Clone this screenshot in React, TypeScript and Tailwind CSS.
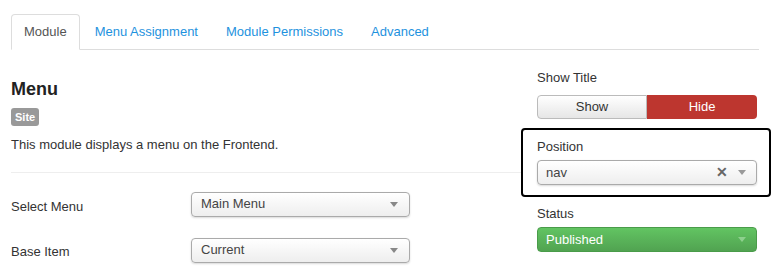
import React from "react";

const TABS = ["Module", "Menu Assignment", "Module Permissions", "Advanced"];

const Caret = ({ cls }: { cls: string }) => (
  <svg viewBox="0 0 8 5" className={`w-[8px] h-[5px] ${cls}`}><path d="M0 0h8L4 5z" /></svg>
);

const SelectBox = ({ value }: { value: string }) => (
  <div className="w-[219px] h-[25px] rounded-[4px] border border-[#aaa] bg-gradient-to-b from-white to-[#eee] shadow-[0_1px_2px_rgba(0,0,0,0.15)] flex items-center justify-between pl-[9px] pr-[11px]">
    <span className="text-[13px] text-[#444]">{value}</span>
    <Caret cls="fill-[#888]" />
  </div>
);

export default function App() {
  return (
    <div className="w-[780px] h-[274px] bg-white text-[#333] text-[13px] overflow-hidden" style={{ fontFamily: '"Liberation Sans", Arial, sans-serif' }}>
      <div className="pt-[14px] pl-[11px] w-[759px]">
        <div className="flex border-b border-[#ddd] h-[36px]">
          {TABS.map((t, i) => (
            <div key={t}
              className={`px-3 mr-[2px] flex items-center rounded-t-[4px] border mb-[-1px] ${i === 0 ? "border-[#ddd] border-b-white bg-white text-[#555]" : "border-transparent text-[#1e92de]"}`}>
              {t}
            </div>
          ))}
        </div>
      </div>

      <div className="flex pl-[11px]">
        <div className="w-[510px]">
          <h3 className="text-[18px] font-bold text-[#222] mt-[29px] leading-[20px]">Menu</h3>
          <span className="inline-block mt-[9px] h-[18px] px-[4px] rounded-[3px] bg-[#999] text-white text-[11px] font-bold leading-[18px]">Site</span>
          <p className="mt-[8px] leading-[20px]">This module displays a menu on the Frontend.</p>
          <div className="mt-[17px] border-t border-[#eee]" />
          <div className="mt-[19px] flex items-start">
            <div className="w-[180px] pt-[6px] leading-[18px]">Select Menu</div>
            <SelectBox value="Main Menu" />
          </div>
          <div className="mt-[21px] flex items-start">
            <div className="w-[180px] pt-[5px] leading-[18px]">Base Item</div>
            <SelectBox value="Current" />
          </div>
        </div>

        <div className="w-[250px] pt-[19px]">
          <div className="pl-[16px] leading-[18px]">Show Title</div>
          <div className="ml-[16px] mt-[8px] flex w-[220px] h-[24px]">
            <div className="w-[110px] flex items-center justify-center rounded-l-[4px] border border-[#bbb] bg-gradient-to-b from-white to-[#e6e6e6] text-[#333]">Show</div>
            <div className="w-[110px] flex items-center justify-center rounded-r-[4px] bg-[#bd362f] text-white">Hide</div>
          </div>
          <div className="mt-[9px] h-[69px] border-2 border-black rounded-[4px] px-[14px] pt-[8px] bg-white">
            <div className="leading-[18px]">Position</div>
            <div className="mt-[4px] h-[25px] w-[220px] rounded-[4px] border border-[#aaa] bg-gradient-to-b from-white to-[#eee] shadow-[0_1px_2px_rgba(0,0,0,0.15)] flex items-center pl-[8px] pr-[10px]">
              <span className="flex-1 text-[#444]">nav</span>
              <span className="text-[#666] font-bold text-[14px] mr-[10px]">✕</span>
              <Caret cls="fill-[#999]" />
            </div>
          </div>
          <div className="pl-[16px] mt-[8px] leading-[18px]">Status</div>
          <div className="ml-[16px] mt-[4px] h-[25px] w-[220px] rounded-[4px] border border-[#4a9c4a] bg-gradient-to-b from-[#62c462] to-[#51a351] flex items-center justify-between pl-[8px] pr-[10px] text-white">
            <span>Published</span>
            <Caret cls="fill-[#8ed08e]" />
          </div>
        </div>
      </div>
    </div>
  );
}
